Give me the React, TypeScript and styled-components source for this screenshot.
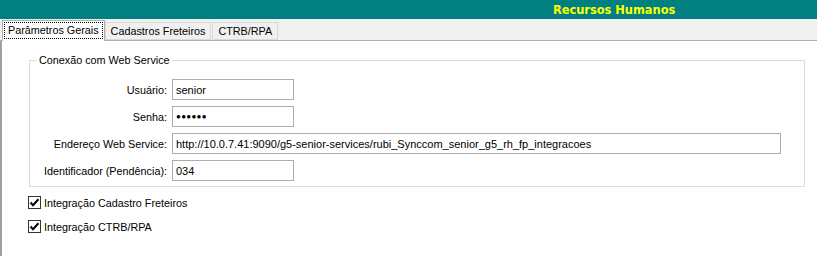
import styled, { createGlobalStyle } from "styled-components";

const GlobalStyle = createGlobalStyle`
    html, body {
        margin: 0;
        padding: 0;
        background: #f0f0f0;
        font-family: "Liberation Sans", Arial, sans-serif;
        font-size: 11px;
        color: #000;
    }
`

const tabs = ["Parâmetros Gerais", "Cadastros Freteiros", "CTRB/RPA"];

const fields = [
    {label: "Usuário:", value: "senior", wide: false},
    {label: "Senha:", value: "●●●●●●", wide: false, secret: true},
    {label: "Endereço Web Service:", value: "http://10.0.7.41:9090/g5-senior-services/rubi_Synccom_senior_g5_rh_fp_integracoes", wide: true},
    {label: "Identificador (Pendência):", value: "034", wide: false},
];

const checks = ["Integração Cadastro Freteiros", "Integração CTRB/RPA"];

const CheckMark = () => (
    <svg width="11" height="11" viewBox="0 0 11 11">
        <path d="M1.5 5.5 L4 8.2 L9.5 2.2" fill="none" stroke="#000" strokeWidth="2"/>
    </svg>
);

export default function App() {
    return (
        <Screen>
            <GlobalStyle/>
            <Header>
                <Title>Recursos Humanos</Title>
            </Header>
            <TabStrip>
                {tabs.map((t, i) => (
                    <Tab key={t} active={i === 0}>
                        {i === 0 ? <Focus>{t}</Focus> : t}
                    </Tab>
                ))}
            </TabStrip>
            <Panel>
                <Group>
                    <Legend>Conexão com Web Service</Legend>
                    <Form>
                        {fields.map(f => (
                            <Row key={f.label}>
                                <Label>{f.label}</Label>
                                <Input wide={f.wide} secret={f.secret}>{f.value}</Input>
                            </Row>
                        ))}
                    </Form>
                </Group>
                <Checks>
                    {checks.map(c => (
                        <CheckRow key={c}>
                            <Box><CheckMark/></Box>
                            <span>{c}</span>
                        </CheckRow>
                    ))}
                </Checks>
            </Panel>
        </Screen>
    );
}

const Screen = styled.div`
    width: 817px;
    height: 256px;
    display: flex;
    flex-direction: column;
    overflow: hidden;
`

const Header = styled.div`
    height: 19px;
    background: #008080;
    display: flex;
    align-items: center;
    padding-left: 553px;
`

const Title = styled.div`
    font-family: "DejaVu Sans", Verdana, sans-serif;
    font-weight: bold;
    font-size: 11.4px;
    color: #ffff00;
`

const TabStrip = styled.div`
    height: 22px;
    display: flex;
    align-items: flex-end;
    padding-left: 2px;
    border-bottom: 1px solid #adadad;
    box-sizing: border-box;
`

const Tab = styled.div<{active?: boolean}>`
    height: ${p => p.active ? 21 : 18}px;
    margin-bottom: ${p => p.active ? -1 : 0}px;
    padding: 0 ${p => p.active ? 1 : 5}px;
    margin-right: ${p => p.active ? 0 : 1}px;
    background: ${p => p.active ? "#fff" : "#f0f0f0"};
    border: 1px solid ${p => p.active ? "#adadad" : "#d9d9d9"};
    border-bottom: ${p => p.active ? "none" : "1px solid #d9d9d9"};
    box-sizing: border-box;
    display: flex;
    align-items: ${p => p.active ? "flex-start" : "center"};
    padding-top: ${p => p.active ? 1 : 0}px;
    font-size: 10.8px;
    white-space: nowrap;
`

const Focus = styled.span`
    border: 1px dotted #000;
    padding: 1px 3px;
    line-height: 13px;
`

const Panel = styled.div`
    flex: 1;
    background: #fff;
    border-left: 2px solid #a0a0a0;
    padding: 13px 12px 0 27px;
`

const Group = styled.fieldset`
    margin: 0;
    padding: 12px 0 5px 0;
    border: 1px solid #dcdcdc;
    min-width: 0;
`

const Legend = styled.legend`
    padding: 0 2px;
    margin-left: 7px;
    font-size: 10.8px;
    line-height: 13px;
`

const Form = styled.div`
    display: flex;
    flex-direction: column;
    gap: 6px;
`

const Row = styled.div`
    display: grid;
    grid-template-columns: 137px 1fr;
    column-gap: 5px;
    align-items: center;
`

const Label = styled.div`
    text-align: right;
    font-size: 10.8px;
`

const Input = styled.div<{wide?: boolean, secret?: boolean}>`
    width: ${p => p.wide ? 609 : 122}px;
    height: 21px;
    box-sizing: border-box;
    border: 1px solid #adadad;
    padding: 0 3px;
    display: flex;
    align-items: center;
    font-size: ${p => p.secret ? 8 : 11}px;
    letter-spacing: ${p => p.secret ? 0.3 : 0}px;
    white-space: nowrap;
`

const Checks = styled.div`
    display: flex;
    flex-direction: column;
    gap: 11px;
    margin-top: 9px;
    margin-left: -1px;
`

const CheckRow = styled.div`
    display: flex;
    align-items: center;
    gap: 3px;
    font-size: 10.8px;
`

const Box = styled.div`
    width: 13px;
    height: 13px;
    box-sizing: border-box;
    border: 1px solid #333;
    display: flex;
    align-items: center;
    justify-content: center;
`
